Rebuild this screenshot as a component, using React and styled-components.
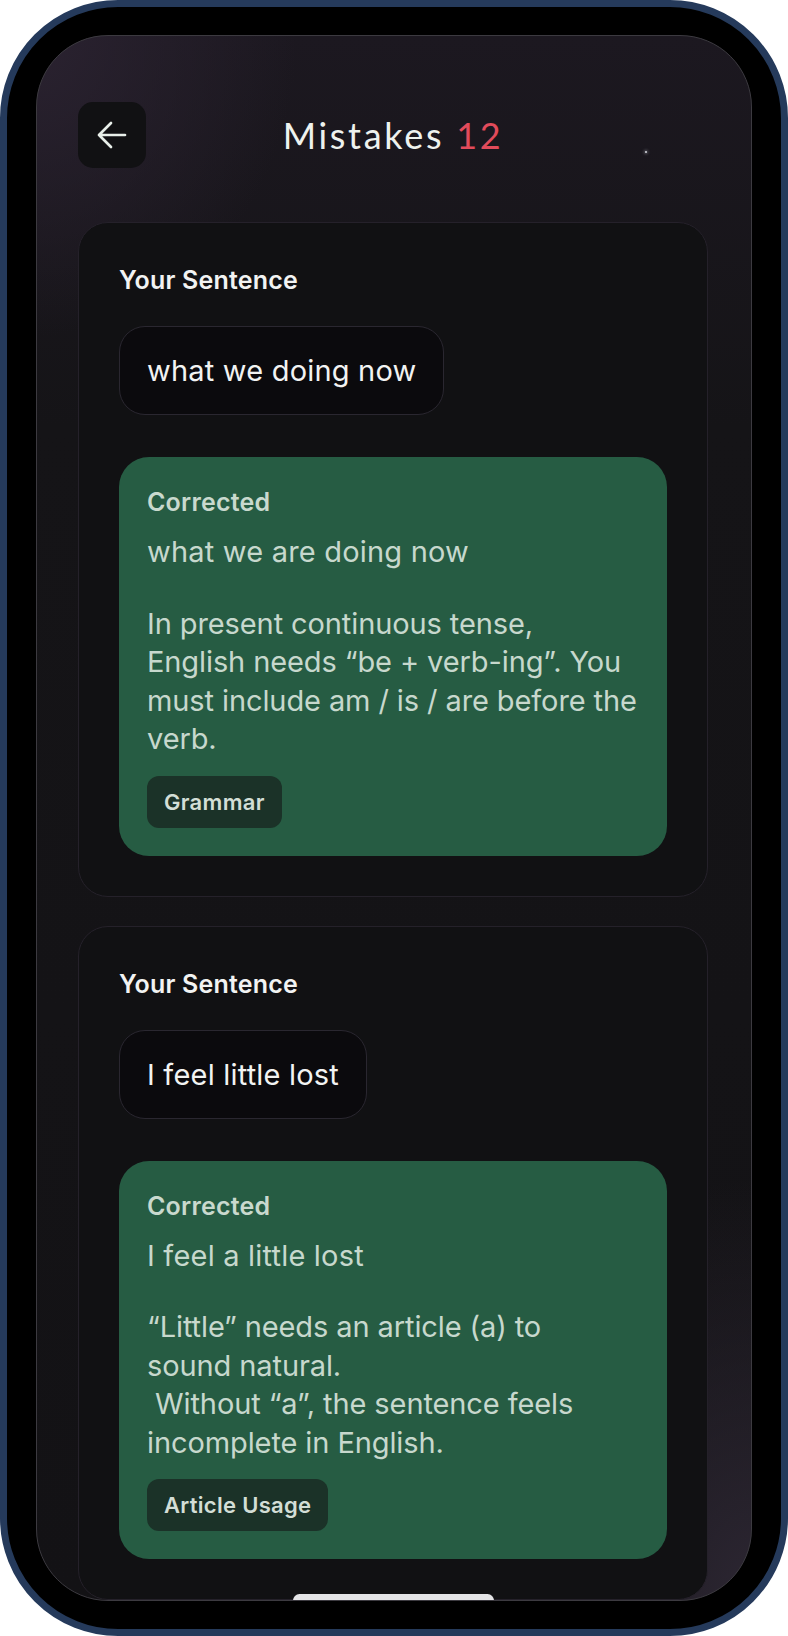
import React from 'react';
import styled, { createGlobalStyle } from 'styled-components';

const GlobalStyle = createGlobalStyle`
  html, body {
    margin: 0;
    padding: 0;
    background: #ffffff;
  }
  * {
    box-sizing: border-box;
  }
`;

const Phone = styled.div`
  width: 788px;
  height: 1636px;
  border: 7px solid #253a5b;
  border-radius: 118px;
  background: #000;
  padding: 28px 29px 28px 29px;
  display: flex;
`;

const Screen = styled.div`
  flex: 1;
  position: relative;
  overflow: hidden;
  border-radius: 72px;
  border: 1px solid #3c3a40;
  background:
    radial-gradient(ellipse 260px 300px at 0% 0%, #2a2230 0%, rgba(42, 34, 48, 0) 100%),
    radial-gradient(ellipse 260px 420px at 100% 100%, #2c2632 0%, rgba(44, 38, 50, 0) 100%),
    linear-gradient(180deg, #1c1820 0%, #151417 25%, #131215 100%);
  padding: 66px 43px 0 41px;
  display: flex;
  flex-direction: column;
  font-family: Inter, 'Noto Sans', sans-serif;
`;

const Header = styled.header`
  display: grid;
  grid-template-columns: 68px 1fr 68px;
  align-items: center;
  height: 66px;
  margin-bottom: 54px;
`;

const BackButton = styled.button`
  width: 68px;
  height: 66px;
  border: none;
  border-radius: 15px;
  background: #111113;
  display: flex;
  align-items: center;
  justify-content: center;
  padding: 0;
  cursor: pointer;
`;

const Title = styled.h1`
  margin: 0;
  text-align: center;
  font-family: Lato, 'Open Sans', sans-serif;
  font-weight: 400;
  font-size: 36px;
  letter-spacing: 2.7px;
  color: #eef2ee;
`;

const Count = styled.span`
  color: #e24b5b;
`;

const Star = styled.span`
  position: absolute;
  left: 608px;
  top: 115px;
  width: 2px;
  height: 2px;
  border-radius: 50%;
  background: #d8dbe0;
  box-shadow: 0 0 3px 1px rgba(200, 205, 220, 0.4);
`;

const List = styled.div`
  display: flex;
  flex-direction: column;
  gap: 29px;
`;

const Card = styled.section`
  border: 1px solid #25212a;
  border-radius: 30px;
  background: #111113;
  padding: 44px 40px 40px;
`;

const Label = styled.div`
  font-size: 25px;
  line-height: 26px;
  font-weight: 600;
  letter-spacing: 0.2px;
  color: ${(p) => p.$color || '#f2f3f2'};
`;

const Sentence = styled.div`
  display: inline-block;
  margin-top: 33px;
  padding: 28px 27px;
  border: 1px solid #2a2730;
  border-radius: 26px;
  background: #0b0a0d;
  font-size: 29px;
  line-height: 31px;
  letter-spacing: 0.2px;
  color: #f2f3f2;
`;

const Correction = styled.div`
  margin-top: 42px;
  border-radius: 30px;
  background: #265c43;
  padding: 32px 28px 28px;
  color: #c7d8cd;
`;

const Fixed = styled.p`
  margin: 18px 0 0;
  font-size: 29px;
  line-height: 38.5px;
  letter-spacing: 0.2px;
`;

const Explanation = styled.p`
  margin: 33px 0 0;
  font-size: 29px;
  line-height: 38.5px;
  letter-spacing: -0.1px;
  white-space: pre-wrap;
`;

const Tag = styled.span`
  display: inline-flex;
  align-items: center;
  height: 52px;
  margin-top: 17px;
  padding: 0 17px;
  border-radius: 12px;
  background: #1b3228;
  color: #d3ded6;
  font-size: 22px;
  font-weight: 600;
  letter-spacing: 0.3px;
`;

const HomeIndicator = styled.span`
  position: absolute;
  left: 50%;
  bottom: -7px;
  width: 201px;
  height: 13px;
  margin-left: -101px;
  border-radius: 7px;
  background: #e4e4e6;
`;

const BackArrow = () => (
  <svg width="30" height="28" viewBox="0 0 30 28" fill="none">
    <path
      d="M14 2 L2 14 L14 26 M2 14 H28"
      stroke="#e8efe9"
      strokeWidth="2.7"
      strokeLinecap="round"
      strokeLinejoin="round"
    />
  </svg>
);

const mistakes = [
  {
    said: 'what we doing now',
    fixed: 'what we are doing now',
    why: 'In present continuous tense, English needs “be + verb-ing”. You must include am / is / are before the verb.',
    tag: 'Grammar',
  },
  {
    said: 'I feel little lost',
    fixed: 'I feel a little lost',
    why: '“Little” needs an article (a) to\nsound natural.\n Without “a”, the sentence feels incomplete in English.',
    tag: 'Article Usage',
  },
];

const MistakeCard = ({ item }) => (
  <Card>
    <Label>Your Sentence</Label>
    <Sentence>{item.said}</Sentence>
    <Correction>
      <Label $color="#c9d9ce">Corrected</Label>
      <Fixed>{item.fixed}</Fixed>
      <Explanation>{item.why}</Explanation>
      <Tag>{item.tag}</Tag>
    </Correction>
  </Card>
);

export default function App() {
  return (
    <>
      <GlobalStyle />
      <Phone>
        <Screen>
          <Star />
          <Header>
            <BackButton aria-label="Back">
              <BackArrow />
            </BackButton>
            <Title>
              Mistakes <Count>12</Count>
            </Title>
            <span />
          </Header>
          <List>
            {mistakes.map((m) => (
              <MistakeCard key={m.tag} item={m} />
            ))}
          </List>
          <HomeIndicator />
        </Screen>
      </Phone>
    </>
  );
}
